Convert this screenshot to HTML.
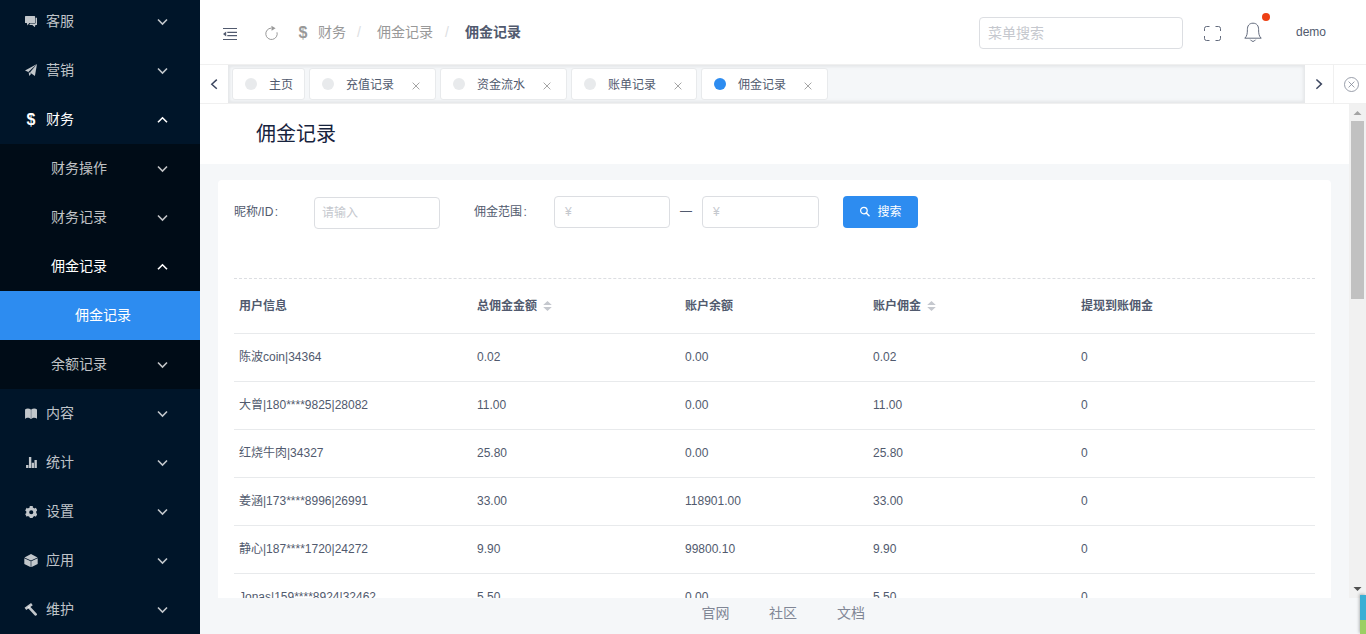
<!DOCTYPE html>
<html lang="zh-CN">
<head>
<meta charset="utf-8">
<title>佣金记录</title>
<style>
*{box-sizing:border-box;margin:0;padding:0}
html,body{width:1366px;height:634px;overflow:hidden}
body{font-family:"Liberation Sans","Noto Sans CJK SC",sans-serif;font-size:12px;color:#515a6e;background:#f5f7f9;position:relative}
.abs{position:absolute}
/* sidebar */
#side{position:absolute;left:0;top:0;width:200px;height:634px;background:#001529;overflow:hidden}
#side .it{position:absolute;left:0;width:200px;height:49px;line-height:49px;font-size:14px;color:rgba(255,255,255,.76);white-space:nowrap}
#side .it .tx{position:absolute;left:46px;top:0}
#side .it.sub .tx{left:51px}
#side .it.on{color:#fff}
#side .it.leaf .tx{left:75px}
#side .it svg.ic{position:absolute;left:25px;top:18px;width:12px;height:12px;fill:currentColor}
#side .it svg.ar{position:absolute;left:156.5px;top:21px;width:11px;height:8px;fill:none;stroke:currentColor;stroke-width:1.6}
#side .it .usd{position:absolute;left:26.5px;top:0;font-size:16px;font-weight:700;line-height:49px}
#side .subbg{position:absolute;left:0;top:144px;width:200px;height:245px;background:#000c17}
#side .act{position:absolute;left:0;top:291px;width:200px;height:49px;background:#2d8cf0}
/* header */
#hdr{position:absolute;left:200px;top:0;width:1166px;height:64px;background:#fff}
#hdr .bc{position:absolute;top:0;height:64px;line-height:64px;font-size:14px;color:#999;white-space:nowrap}
#tags{position:absolute;left:200px;top:64px;width:1166px;height:40px;background:#fff;border-top:1px solid #f0f0f0;border-bottom:1px solid #f0f0f0}
#tags .sc{position:absolute;left:28px;top:0;width:1077px;height:38px;background:#f5f7f9;box-shadow:inset 0 0 3px 2px rgba(100,100,100,.1)}
#tags .nb{position:absolute;top:0;height:38px;background:#fff}
#tags .nb svg{position:absolute;fill:none}
.tag{position:absolute;top:3px;height:32px;background:#fff;border:1px solid #e8eaec;border-radius:3px;font-size:12px;line-height:30px;color:#515a6e;white-space:nowrap}
.tag .dot{position:absolute;left:12px;top:9px;width:12px;height:12px;border-radius:50%;background:#e8eaec}
.tag .dot.b{background:#2d8cf0}
.tag .t{position:absolute;left:36px;top:1px}
.tag svg{position:absolute;left:101.5px;top:12.6px;width:8px;height:8px;stroke:#999;stroke-width:1;fill:none}
#ph{position:absolute;left:200px;top:104px;width:1149px;height:60px;background:#fff}
#ph h1{position:absolute;left:56px;top:0;line-height:60px;font-size:20px;font-weight:400;color:#17233d}
#card{position:absolute;left:218px;top:180px;width:1113px;height:460px;background:#fff;border-radius:4px}
.lbl{position:absolute;font-size:12px;line-height:32px;color:#515a6e;white-space:nowrap}
.inp{position:absolute;height:32px;border:1px solid #dcdee2;border-radius:4px;background:#fff;font-size:12px;line-height:30px;color:#c5c8ce;padding-left:8px;white-space:nowrap}
#btn{position:absolute;left:625px;top:16px;width:75px;height:32px;background:#2d8cf0;border-radius:4px;color:#fff;font-size:12px;line-height:32px}
table{position:absolute;left:16px;top:99px;width:1081px;border-collapse:collapse;table-layout:fixed;font-size:12px;color:#515a6e}
svg.so{width:9px;height:10px;margin-left:6px;vertical-align:-1px;fill:#c5c8ce}
th{height:54px;line-height:18px;text-align:left;padding-left:5px;font-weight:700;border-bottom:1px solid #e8eaec;white-space:nowrap}
td{height:48px;line-height:18px;padding-left:5px;border-bottom:1px solid #e8eaec;white-space:nowrap}
#foot{position:absolute;left:200px;top:598px;width:1166px;height:36px;background:#f5f7f9}
#foot span{position:absolute;top:0;line-height:30px;font-size:14px;color:#808695}
#sb{position:absolute;left:1349px;top:104px;width:17px;height:494px;background:#f1f1f1}
#sb .th{position:absolute;left:2px;top:17px;width:13px;height:178px;background:#c1c1c1}
</style>
</head>
<body>
<div id="side">
  <div class="subbg"></div>
  <div class="act"></div>
  <div class="it" style="top:-3px"><svg class="ic" viewBox="0 0 12.2 11.2" style="left:24.9px;top:19.1px;width:12.2px;height:11.2px"><path d="M.5 0H9.6a.5 .5 0 0 1 .5 .5V6.5a.5 .5 0 0 1-.5 .5H4.3L2.5 9.4L1.8 7H.5a.5 .5 0 0 1-.5-.5V.5A.5 .5 0 0 1 .5 0Z"/><path d="M10.6 1.8H11.7a.5 .5 0 0 1 .5 .5V8.4a.5 .5 0 0 1-.5 .5H10.4L9.9 11.2L7.3 8.9H4.3L5 7.5H10.1a.5 .5 0 0 0 .5-.5Z"/></svg><span class="tx">客服</span><svg class="ar" viewBox="0 0 11 8"><path d="M1 1.5 L5.5 6 L10 1.5"/></svg></div>
  <div class="it" style="top:46px"><svg class="ic" viewBox="0 0 12 12" style="left:24.9px;top:17.9px;width:12px;height:12px"><path d="M12 0L0 6.4L3.3 8Z"/><path d="M12 0L4.9 8.6L9.9 12Z"/><path d="M3.7 8.2L4.2 11.9L6.2 9.7L4.5 8.5Z"/></svg><span class="tx">营销</span><svg class="ar" viewBox="0 0 11 8"><path d="M1 1.5 L5.5 6 L10 1.5"/></svg></div>
  <div class="it on" style="top:95px"><b class="usd">$</b><span class="tx">财务</span><svg class="ar" viewBox="0 0 11 8"><path d="M1 6.3 L5.5 1.8 L10 6.3"/></svg></div>
  <div class="it sub" style="top:144px"><span class="tx">财务操作</span><svg class="ar" viewBox="0 0 11 8"><path d="M1 1.5 L5.5 6 L10 1.5"/></svg></div>
  <div class="it sub" style="top:193px"><span class="tx">财务记录</span><svg class="ar" viewBox="0 0 11 8"><path d="M1 1.5 L5.5 6 L10 1.5"/></svg></div>
  <div class="it sub on" style="top:242px"><span class="tx">佣金记录</span><svg class="ar" viewBox="0 0 11 8"><path d="M1 6.3 L5.5 1.8 L10 6.3"/></svg></div>
  <div class="it sub on leaf" style="top:291px"><span class="tx">佣金记录</span></div>
  <div class="it sub" style="top:340px"><span class="tx">余额记录</span><svg class="ar" viewBox="0 0 11 8"><path d="M1 1.5 L5.5 6 L10 1.5"/></svg></div>
  <div class="it" style="top:389px"><svg class="ic" viewBox="0 0 12 11.4" style="left:24.9px;top:19.1px;width:12.1px;height:11.4px"><path d="M0 1.6C1.5 .1 4.1 .1 5.85 1.6V11.3C4.6 9.3 1.4 9.3 0 10.9Z"/><path d="M12 1.6C10.5 .1 7.9 .1 6.15 1.6V11.3C7.4 9.3 10.6 9.3 12 10.9Z"/></svg><span class="tx">内容</span><svg class="ar" viewBox="0 0 11 8"><path d="M1 1.5 L5.5 6 L10 1.5"/></svg></div>
  <div class="it" style="top:438px"><svg class="ic" viewBox="0 0 11 11" style="left:25.6px;top:19px;width:11px;height:10.9px"><path d="M0 8H2.4V11H0zM2.9 0H5.3V11H2.9zM5.8 5.9H8V11H5.8zM8.5 3H10.9V11H8.5z"/></svg><span class="tx">统计</span><svg class="ar" viewBox="0 0 11 8"><path d="M1 1.5 L5.5 6 L10 1.5"/></svg></div>
  <div class="it" style="top:487px"><svg class="ic" viewBox="0 0 12 12" style="left:24.7px;top:18.6px;width:12.5px;height:12.5px"><path fill-rule="evenodd" d="M4.49 1.34L4.54 0.08L7.46 0.08L7.51 1.34L9.28 2.36L10.40 1.78L11.86 4.30L10.79 4.98L10.79 7.02L11.86 7.70L10.40 10.22L9.28 9.64L7.51 10.66L7.46 11.92L4.54 11.92L4.49 10.66L2.72 9.64L1.60 10.22L0.14 7.70L1.21 7.02L1.21 4.98L0.14 4.30L1.60 1.78L2.72 2.36ZM4.00 6.00a2.00 2.00 0 1 0 4.00 0a2.00 2.00 0 1 0 -4.00 0Z"/></svg><span class="tx">设置</span><svg class="ar" viewBox="0 0 11 8"><path d="M1 1.5 L5.5 6 L10 1.5"/></svg></div>
  <div class="it" style="top:536px"><svg class="ic" viewBox="0 0 14 13.2" style="left:24px;top:18px;width:14px;height:13.2px"><path d="M7 0L13.6 3.4L7 6.6L.4 3.4Z"/><path d="M.3 4.2L6.7 7.3V13.2L.3 10Z"/><path d="M13.7 4.2L7.3 7.3V13.2L13.7 10Z"/></svg><span class="tx">应用</span><svg class="ar" viewBox="0 0 11 8"><path d="M1 1.5 L5.5 6 L10 1.5"/></svg></div>
  <div class="it" style="top:585px"><svg class="ic" viewBox="0 0 14 13.2" style="left:24.3px;top:18px;width:14px;height:13.2px"><path d="M1.4 5.9L7.9 1.2" stroke="currentColor" stroke-width="2.9" fill="none"/><path d="M5.3 4.7L11.6 11.4" stroke="currentColor" stroke-width="2.7" stroke-linecap="round" fill="none"/></svg><span class="tx">维护</span><svg class="ar" viewBox="0 0 11 8"><path d="M1 1.5 L5.5 6 L10 1.5"/></svg></div>
</div>

<div id="hdr">
  <svg class="abs" style="left:22px;top:27px;width:16px;height:14px" viewBox="0 0 16 14"><path d="M1 1.5H15 M5.3 5.3H15 M5.3 8.7H15 M1 12.5H15" stroke="#515a6e" stroke-width="1.2" fill="none"/><path d="M1 7 L4.2 4.4 V9.6Z" fill="#515a6e"/></svg>
  <svg class="abs" style="left:64px;top:25px;width:16px;height:17px" viewBox="0 0 16 17"><path d="M13 7.3 A5.7 5.7 0 1 1 7.2 3.1" stroke="#999" stroke-width="1" fill="none"/><path d="M7.4 .7 L11.6 3.3 L7.6 5.8Z" fill="#999"/></svg>
  <b class="abs" style="left:98.5px;top:0;line-height:65px;font-size:16px;color:#999">$</b>
  <div class="bc" style="left:118px">财务</div>
  <div class="bc" style="left:157px;color:#dcdee2">/</div>
  <div class="bc" style="left:177px">佣金记录</div>
  <div class="bc" style="left:245px;color:#dcdee2">/</div>
  <div class="bc" style="left:265px;color:#515a6e;font-weight:700">佣金记录</div>
  <div class="inp" style="left:779px;top:17px;width:204px;font-size:14px">菜单搜索</div>
  <svg class="abs" style="left:1004px;top:26px;width:17px;height:15px" viewBox="0 0 17 15"><path d="M.5 5V2.5A2 2 0 0 1 2.5 .5H5.5 M11.5 .5H14.5A2 2 0 0 1 16.5 2.5V5 M16.5 10V12.5A2 2 0 0 1 14.5 14.5H11.5 M5.5 14.5H2.5A2 2 0 0 1 .5 12.5V10" stroke="#515a6e" stroke-width=".9" fill="none"/></svg>
  <svg class="abs" style="left:1044px;top:22px;width:18px;height:21px" viewBox="0 0 18 21"><path d="M9 1.2C5 1.2 3.4 4 3.4 7.5C3.4 11.5 3 14.2 .8 16.2H17.2C15 14.2 14.6 11.5 14.6 7.5C14.6 4 13 1.2 9 1.2Z M6.4 17.7Q9 21.2 11.6 17.7" stroke="#515a6e" stroke-width=".9" fill="none"/></svg>
  <i class="abs" style="left:1062px;top:13px;width:8px;height:8px;border-radius:50%;background:#ed4014"></i>
  <div class="abs" style="left:1096px;top:0;line-height:65px;font-size:12px;color:#515a6e">demo</div>
</div>

<div id="tags">
  <div class="sc"></div>
  <div class="nb" style="left:0;width:28px"><svg style="left:10px;top:13px;width:9px;height:13px" viewBox="0 0 9 13"><path d="M6.8 1.6 L1.8 6.2 L6.8 10.8" stroke="#3d4760" stroke-width="1.5"/></svg></div>
  <div class="nb" style="left:1105px;width:28px"><svg style="left:10px;top:13px;width:9px;height:13px" viewBox="0 0 9 13"><path d="M1.4 1.5 L6.4 6.1 L1.4 10.7" stroke="#3d4760" stroke-width="1.5"/></svg></div>
  <div class="nb" style="left:1133px;width:33px;border-left:1px solid #f0f0f0"><svg style="left:8.6px;top:10.5px;width:17px;height:17px" viewBox="0 0 17 17"><circle cx="8.5" cy="8.5" r="7" stroke="#808695" stroke-width=".8"/><path d="M5.6 5.6 L11.4 11.4 M11.4 5.6 L5.6 11.4" stroke="#808695" stroke-width=".8"/></svg></div>
  <div class="tag" style="left:32px;width:73px"><i class="dot"></i><span class="t">主页</span></div>
  <div class="tag" style="left:109px;width:127px"><i class="dot"></i><span class="t">充值记录</span><svg viewBox="0 0 9 9"><path d="M.7 .7 L8.3 8.3 M8.3 .7 L.7 8.3"/></svg></div>
  <div class="tag" style="left:240px;width:127px"><i class="dot"></i><span class="t">资金流水</span><svg viewBox="0 0 9 9"><path d="M.7 .7 L8.3 8.3 M8.3 .7 L.7 8.3"/></svg></div>
  <div class="tag" style="left:371px;width:126px"><i class="dot"></i><span class="t">账单记录</span><svg viewBox="0 0 9 9"><path d="M.7 .7 L8.3 8.3 M8.3 .7 L.7 8.3"/></svg></div>
  <div class="tag" style="left:501px;width:127px"><i class="dot b"></i><span class="t">佣金记录</span><svg viewBox="0 0 9 9"><path d="M.7 .7 L8.3 8.3 M8.3 .7 L.7 8.3"/></svg></div>
</div>

<div id="ph"><h1>佣金记录</h1></div>

<div id="card">
  <div class="lbl" style="left:16px;top:16px">昵称/ID<span style="margin-left:1.5px">:</span></div>
  <div class="inp" style="left:96px;top:17px;width:126px;padding-left:7px">请输入</div>
  <div class="lbl" style="left:256px;top:16px">佣金范围<span style="margin-left:1.5px">:</span></div>
  <div class="inp" style="left:336px;top:16px;width:116px;padding-left:10px">¥</div>
  <div class="lbl" style="left:462px;top:15px;font-family:'Liberation Sans',sans-serif">—</div>
  <div class="inp" style="left:484px;top:16px;width:117px;padding-left:10px">¥</div>
  <div id="btn"><svg class="abs" style="left:16px;top:10px;width:11px;height:11px" viewBox="0 0 11 11"><circle cx="4.9" cy="4.6" r="3.3" stroke="#fff" stroke-width="1.2" fill="none"/><path d="M7.3 7L10.1 9.8" stroke="#fff" stroke-width="1.4" stroke-linecap="round"/></svg><span class="abs" style="left:34.5px">搜索</span></div>
  <div class="abs" style="left:16px;top:98px;width:1081px;border-top:1px dashed #dcdee2"></div>
  <table>
    <colgroup><col style="width:238px"><col style="width:208px"><col style="width:188px"><col style="width:208px"><col style="width:239px"></colgroup>
    <tr><th>用户信息</th><th>总佣金金额<svg class="so" viewBox="0 0 9 10"><path d="M.2 4 L4.5 0 L8.8 4Z M.2 6 L4.5 10 L8.8 6Z"/></svg></th><th>账户余额</th><th>账户佣金<svg class="so" viewBox="0 0 9 10"><path d="M.2 4 L4.5 0 L8.8 4Z M.2 6 L4.5 10 L8.8 6Z"/></svg></th><th>提现到账佣金</th></tr>
    <tr><td>陈波coin|34364</td><td>0.02</td><td>0.00</td><td>0.02</td><td>0</td></tr>
    <tr><td>大曾|180****9825|28082</td><td>11.00</td><td>0.00</td><td>11.00</td><td>0</td></tr>
    <tr><td>红烧牛肉|34327</td><td>25.80</td><td>0.00</td><td>25.80</td><td>0</td></tr>
    <tr><td>姜涵|173****8996|26991</td><td>33.00</td><td>118901.00</td><td>33.00</td><td>0</td></tr>
    <tr><td>静心|187****1720|24272</td><td>9.90</td><td>99800.10</td><td>9.90</td><td>0</td></tr>
    <tr><td>Jonas|159****8924|32462</td><td>5.50</td><td>0.00</td><td>5.50</td><td>0</td></tr>
  </table>
</div>

<div id="sb"><div class="th"></div>
  <svg class="abs" style="left:4px;top:6px;width:9px;height:6px" viewBox="0 0 9 6"><path d="M.5 5 L4.5 1 L8.5 5Z" fill="#a3a3a3"/></svg>
  <svg class="abs" style="left:4px;top:482px;width:9px;height:6px" viewBox="0 0 9 6"><path d="M.5 1 L4.5 5 L8.5 1Z" fill="#505050"/></svg>
</div>

<div id="foot">
  <span style="left:501.5px">官网</span>
  <span style="left:569px">社区</span>
  <span style="left:637px">文档</span>
</div>
<div class="abs" style="left:1360px;top:595px;width:6px;height:39px;background:#9bcf63;box-shadow:-1px -1px 3px rgba(0,0,0,.25)"><div style="height:25px;background:#3aafd4"></div></div>
</body>
</html>
